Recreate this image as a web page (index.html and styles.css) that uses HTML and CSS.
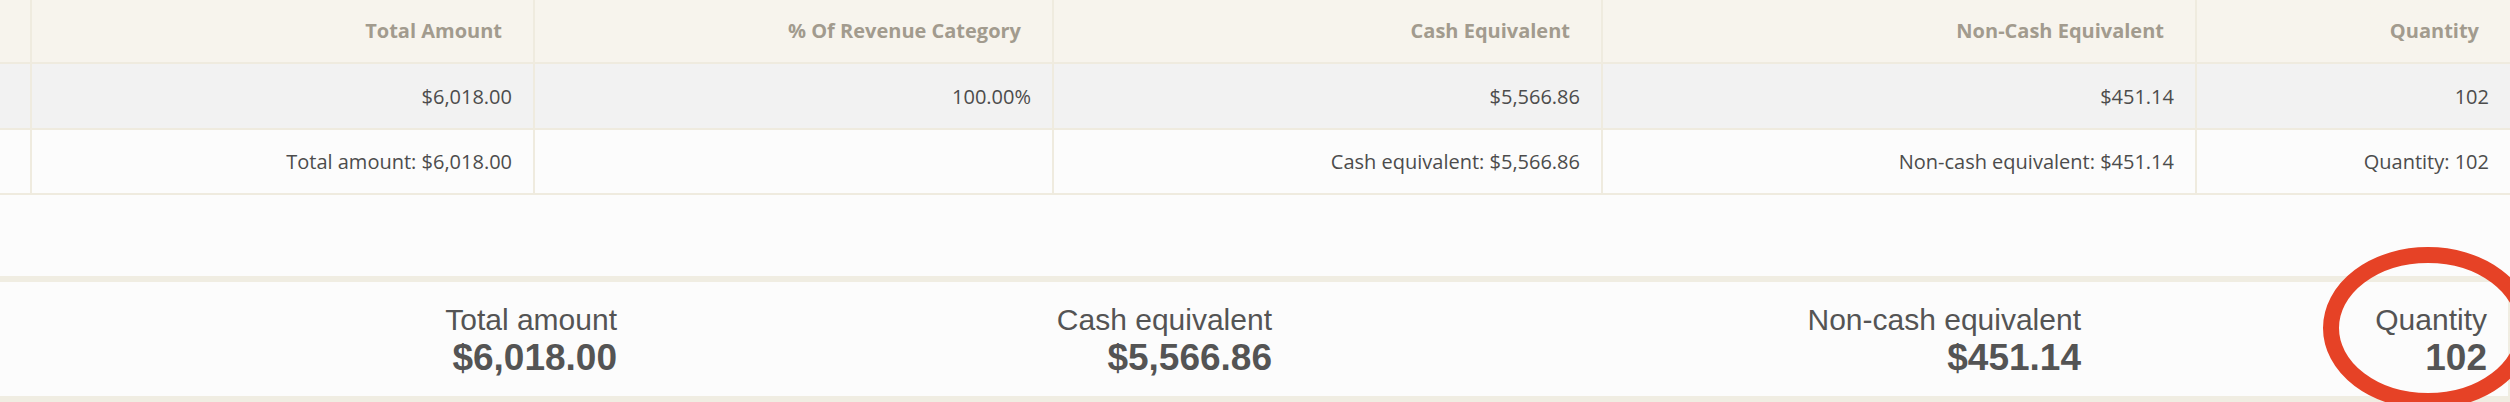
FILE: index.html
```html
<!DOCTYPE html>
<html lang="en">
<head>
<meta charset="utf-8">
<title>Revenue summary</title>
<link rel="stylesheet" href="styles.css">
</head>
<body>
<div class="page">
  <table class="report">
    <colgroup>
      <col class="c0"><col class="c1"><col class="c2"><col class="c3"><col class="c4"><col class="c5">
    </colgroup>
    <thead>
      <tr>
        <th></th>
        <th>Total Amount</th>
        <th>% Of Revenue Category</th>
        <th>Cash Equivalent</th>
        <th>Non-Cash Equivalent</th>
        <th class="last">Quantity</th>
      </tr>
    </thead>
    <tbody>
      <tr class="row-data">
        <td></td>
        <td>$6,018.00</td>
        <td>100.00%</td>
        <td>$5,566.86</td>
        <td>$451.14</td>
        <td class="last">102</td>
      </tr>
      <tr class="row-total">
        <td></td>
        <td>Total amount: $6,018.00</td>
        <td></td>
        <td>Cash equivalent: $5,566.86</td>
        <td>Non-cash equivalent: $451.14</td>
        <td class="last">Quantity: 102</td>
      </tr>
    </tbody>
  </table>

  <div class="summary">
    <div class="stat">
      <div class="stat-label">Total amount</div>
      <div class="stat-value">$6,018.00</div>
    </div>
    <div class="stat">
      <div class="stat-label">Cash equivalent</div>
      <div class="stat-value">$5,566.86</div>
    </div>
    <div class="stat">
      <div class="stat-label">Non-cash equivalent</div>
      <div class="stat-value">$451.14</div>
    </div>
    <div class="stat">
      <div class="stat-label">Quantity</div>
      <div class="stat-value">102</div>
    </div>
    <svg class="annotation" width="240" height="190" viewBox="0 0 240 190" aria-hidden="true">
      <ellipse cx="120" cy="90" rx="97" ry="73" fill="none" stroke="#e64226" stroke-width="16"/>
    </svg>
  </div>
</div>
</body>
</html>
```

FILE: styles.css
```css
* { box-sizing: border-box; }

html, body {
  margin: 0;
  padding: 0;
  background: #fcfcfc;
  font-family: "Open Sans", "Liberation Sans", sans-serif;
  color: #505050;
}

.page {
  width: 2510px;
  height: 402px;
  overflow: hidden;
  position: relative;
}

.report {
  width: 2510px;
  table-layout: fixed;
  border-collapse: separate;
  border-spacing: 0;
}

.c0 { width: 32px; }
.c1 { width: 503px; }
.c2 { width: 519px; }
.c3 { width: 549px; }
.c4 { width: 594px; }
.c5 { width: 313px; }

.report th,
.report td {
  text-align: right;
  vertical-align: middle;
  border-right: 2px solid #efebdf;
  border-bottom: 2px solid #efebdf;
  white-space: nowrap;
}

.report th.last,
.report td.last { border-right: none; }

.report th {
  height: 64px;
  padding: 0 31px 2px 0;
  background: #f7f4ed;
  color: #a29b8e;
  font-weight: 700;
  font-size: 20px;
}

.report td {
  height: 66px;
  padding: 0 21px 0 0;
  font-size: 20px;
  color: #4c4c4c;
}

.row-data td { background: #f2f2f2; }
.row-total td { background: #fcfcfc; height: 65px; }

.summary {
  margin-top: 81px;
  height: 126px;
  border-top: 6px solid #f0ede2;
  border-bottom: 6px solid #f0ede2;
  border-right: 2px solid #f0ede2;
  display: grid;
  grid-template-columns: 617px 655px 809px 1fr;
  align-items: start;
  padding: 21px 21px 0 0;
  position: relative;
  background: #fcfcfc;
  font-family: "Liberation Sans", Arial, sans-serif;
}

.stat {
  text-align: right;
  color: #545454;
}

.stat-label {
  font-size: 30px;
  line-height: 34px;
}

.stat-value {
  font-size: 37px;
  font-weight: 700;
  line-height: 41px;
}

.annotation {
  position: absolute;
  left: 2308px;
  top: -44px;
  pointer-events: none;
}
```
